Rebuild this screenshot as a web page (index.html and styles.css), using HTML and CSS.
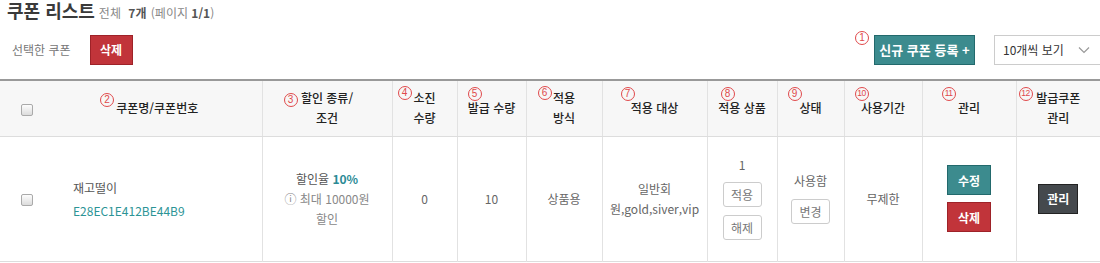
FILE: index.html
```html
<!DOCTYPE html>
<html lang="ko">
<head>
<meta charset="utf-8">
<link rel="stylesheet" href="styles.css">
</head>
<body>
<div class="page-head">
  <h1 class="title">쿠폰 리스트</h1>
  <span class="summary">전체 <b>7개</b> (페이지 <b>1/1</b>)</span>
</div>
<div class="toolbar">
  <div class="tool-left">
    <span class="sel-label">선택한 쿠폰</span>
    <button class="btn btn-red btn-lg">삭제</button>
  </div>
  <div class="tool-right">
    <div class="marked">
      <span class="mk mk-1">1</span>
      <button class="btn btn-teal btn-lg btn-new">신규 쿠폰 등록 +</button>
    </div>
    <div class="select">
      <span>10개씩 보기</span>
      <svg class="chev" width="12" height="8" viewBox="0 0 12 8"><path d="M1 1.5 L6 6.5 L11 1.5" fill="none" stroke="#999" stroke-width="1.2"/></svg>
    </div>
  </div>
</div>
<table class="grid">
  <colgroup>
    <col style="width:53px"><col style="width:209px"><col style="width:130px"><col style="width:65px"><col style="width:69px"><col style="width:76px"><col style="width:105px"><col style="width:70px"><col style="width:67px"><col style="width:78px"><col style="width:94px"><col style="width:84px">
  </colgroup>
  <thead>
    <tr>
      <th class="c-chk"><span class="chk"></span></th>
      <th class="c-name"><span class="mk mk-2">2</span>쿠폰명/쿠폰번호</th>
      <th><span class="mk mk-3">3</span>할인 종류/<br>조건</th>
      <th><span class="mk mk-4">4</span>소진<br>수량</th>
      <th><span class="mk mk-5">5</span>발급 수량</th>
      <th><span class="mk mk-6">6</span>적용<br>방식</th>
      <th><span class="mk mk-7">7</span>적용 대상</th>
      <th><span class="mk mk-8">8</span>적용 상품</th>
      <th><span class="mk mk-9">9</span>상태</th>
      <th><span class="mk mk-10 mk-2d">10</span>사용기간</th>
      <th><span class="mk mk-11 mk-2d">11</span>관리</th>
      <th><span class="mk mk-12 mk-2d">12</span>발급쿠폰<br>관리</th>
    </tr>
  </thead>
  <tbody>
    <tr>
      <td class="c-chk"><span class="chk"></span></td>
      <td class="c-name"><div class="cname">재고떨이</div><div class="ccode">E28EC1E412BE44B9</div></td>
      <td class="c-disc"><div class="rate">할인율 <b>10%</b></div><div class="limit">ⓘ 최대 10000원<br>할인</div></td>
      <td>0</td>
      <td>10</td>
      <td>상품용</td>
      <td class="c-target">일반회<br>원,gold,siver,vip</td>
      <td><div class="stack"><span class="num">1</span><button class="btn-sm">적용</button><button class="btn-sm">해제</button></div></td>
      <td><div class="stack"><span class="state">사용함</span><button class="btn-sm">변경</button></div></td>
      <td>무제한</td>
      <td><div class="stack stack-7"><button class="btn btn-teal btn-act">수정</button><button class="btn btn-red btn-act">삭제</button></div></td>
      <td><button class="btn btn-dark btn-mng">관리</button></td>
    </tr>
  </tbody>
</table>
</body>
</html>
```
FILE: styles.css
```css
* { box-sizing: border-box; }
html, body { margin: 0; padding: 0; background: #fff; }
body {
  font-family: "Noto Sans CJK KR", "Noto Sans", sans-serif;
  font-size: 12px;
  color: #666;
  width: 1100px;
}
.page-head {
  display: flex;
  align-items: baseline;
  gap: 4px;
  padding-left: 7px;
  height: 20px;
}
.title {
  margin: 0;
  font-size: 18px;
  line-height: 20px;
  font-weight: 700;
  color: #3a3a3a;
}
.summary { font-size: 12px; color: #888; }
.summary b { color: #555; font-weight: 700; margin: 0 1px 0 4px; }
.summary b:last-child { margin: 0; }

.toolbar {
  display: flex;
  justify-content: space-between;
  align-items: center;
  margin-top: 14px;
  height: 31px;
  padding-left: 12px;
}
.tool-left, .tool-right { display: flex; align-items: center; }
.sel-label { color: #777; font-size: 12px; margin-right: 19px; }
.tool-right { gap: 19px; }
.marked { position: relative; }

.btn {
  font-family: inherit;
  border: 1px solid;
  color: #fff;
  font-weight: 700;
  font-size: 12px;
  padding: 0;
  cursor: pointer;
}
.btn-lg { height: 30px; }
.btn-red { background: #c1343a; border-color: #9e2228; }
.btn-teal { background: #3c8b8e; border-color: #22696c; }
.btn-dark { background: #45494d; border-color: #222; }
.tool-left .btn-red { width: 43px; }
.btn-new { width: 101px; font-size: 13px; }

.select {
  width: 106px;
  height: 30px;
  border: 1px solid #ccc;
  border-right: none;
  display: flex;
  align-items: center;
  justify-content: space-between;
  padding: 0 10px 0 8px;
  color: #333;
  font-size: 12px;
}

.mk {
  position: absolute;
  width: 14px;
  height: 14px;
  border: 1.2px solid #e0494b;
  border-radius: 50%;
  color: #e0494b;
  font-size: 10px;
  line-height: 11.5px;
  text-align: center;
  font-family: "Liberation Sans", sans-serif;
}
.mk-2d { font-size: 8.5px; letter-spacing: -0.6px; }
.mk-1 { left: -19px; top: -4px; }

.grid {
  border-collapse: collapse;
  table-layout: fixed;
  width: 1100px;
  margin-top: 14px;
  border-top: 2px solid #999;
  border-bottom: 1px solid #ddd;
}
.grid th, .grid td {
  border-left: 1px solid #e2e2e2;
  text-align: center;
  vertical-align: middle;
  padding: 0;
}
.grid th {
  position: relative;
  background: #f7f7f7;
  height: 56px;
  color: #222;
  font-weight: 500;
  font-size: 12px;
  line-height: 20px;
  border-bottom: 1px solid #ddd;
}
.grid td { height: 125px; line-height: 20px; }
.grid .c-chk { border-left: none; }
.grid .c-name { border-left: none; }
td.c-name { text-align: left; padding-left: 20px; line-height: 23px; }
.cname { color: #555; font-size: 12px; }
.ccode { color: #2c9496; }

.chk {
  display: inline-block;
  width: 12px;
  height: 12px;
  border: 1px solid #aaa;
  border-radius: 2px;
  background: linear-gradient(#fdfdfd, #dcdcdc);
  vertical-align: middle;
}

.mk-2 { left: 47px; top: 12px; }
.mk-3 { left: 21px; top: 12px; }
.mk-4 { left: 5px; top: 5px; }
.mk-5 { left: 10px; top: 6px; }
.mk-6 { left: 11px; top: 5px; }
.mk-7 { left: 18px; top: 6px; }
.mk-8 { left: 13px; top: 6px; }
.mk-9 { left: 10px; top: 6px; }
.mk-10 { left: 10px; top: 6px; }
.mk-11 { left: 19px; top: 6px; }
.mk-12 { left: 2px; top: 6px; }

.rate { color: #555; }
.rate b { color: #2b8a95; }
.limit { color: #888; }
.c-target { line-height: 22px; }

.stack { display: flex; flex-direction: column; align-items: center; gap: 8px; }
.stack-7 { gap: 7px; }
.num { line-height: 14px; margin-bottom: 2px; }
.state { line-height: 14px; margin-bottom: 3px; }
.btn-sm {
  font-family: inherit;
  width: 39px;
  height: 25px;
  border: 1px solid #ccc;
  border-radius: 3px;
  background: #fff;
  color: #777;
  font-size: 12px;
  padding: 0;
}
.btn-act { width: 44px; height: 30px; }
.btn-mng { width: 40px; height: 30px; }
```
